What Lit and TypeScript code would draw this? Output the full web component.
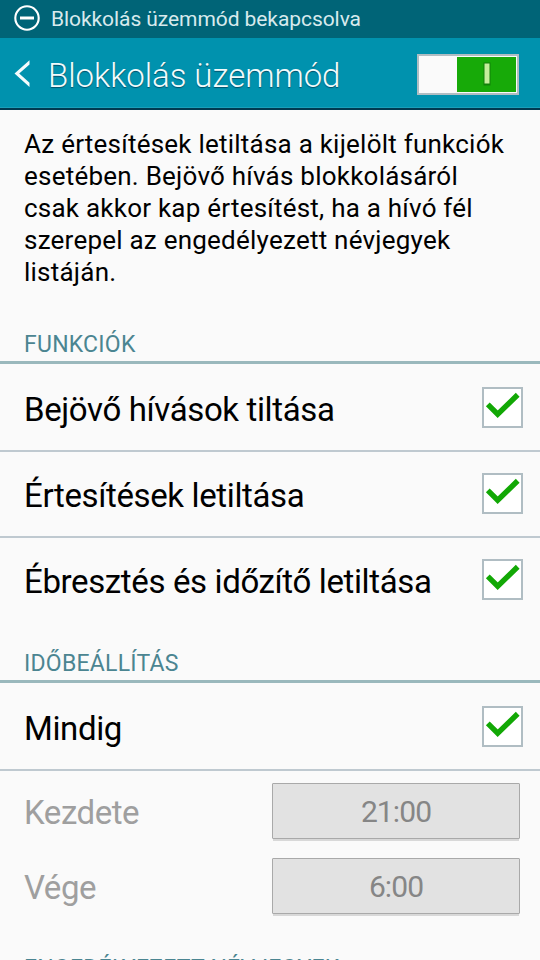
import { LitElement, html, css } from "lit";
import { customElement, property } from "lit/decorators.js";

@customElement("check-row")
class CheckRow extends LitElement {
  @property() label = "";
  static styles = css`
    :host { display: flex; align-items: center; justify-content: space-between; box-sizing: border-box; height: 84px; padding: 0 17px 1px 24px; }
    .label { padding-top: 5px; font-size: 33px; line-height: 40px; white-space: nowrap; color: #000; letter-spacing: -0.37px; }
    .box { box-sizing: border-box; width: 41px; height: 41px; border: 2px solid #b0bdc3; background: #fff; }
    svg { display: block; }
  `;
  render() {
    return html`<span class="label">${this.label}</span>
      <span class="box"><svg width="37" height="37" viewBox="0 0 37 37"><path d="M3.8 15.3 13.7 25.2 33.7 5.8" fill="none" stroke="#12a805" stroke-width="5.4" /></svg></span>`;
  }
}

@customElement("time-row")
class TimeRow extends LitElement {
  @property() label = "";
  @property() time = "";
  static styles = css`
    :host { display: flex; align-items: center; justify-content: space-between; height: 56px; padding: 0 20px 0 24px; color: #9f9f9f; }
    .label { padding-top: 4px; font-size: 33px; line-height: 40px; letter-spacing: -0.45px; }
    .time { box-sizing: border-box; width: 248px; height: 56px; border: 1px solid #a9a9a9; border-radius: 1px; box-shadow: 0 3px 0 -1px #d8d8d8; background: #e2e2e2; color: #868686; font-size: 30px; line-height: 56px; text-align: center; letter-spacing: -0.9px; }
  `;
  render() {
    return html`<span class="label">${this.label}</span><span class="time">${this.time}</span>`;
  }
}

@customElement("app-root")
class AppRoot extends LitElement {
  static styles = css`
    :host { display: flex; flex-direction: column; width: 540px; height: 960px; overflow: hidden; background: #fafafa; font-family: Roboto, sans-serif; font-weight: 400; }
    .status { display: flex; align-items: center; gap: 11px; flex: none; height: 38px; padding-left: 14px; background: #006477; color: #d8eaed; font-size: 21px; letter-spacing: -0.07px; white-space: nowrap; }
    .status svg { margin-top: -2px; }
    .bar { display: flex; align-items: center; box-sizing: border-box; flex: none; height: 72px; padding: 2px 21px 0 14px; background: #0092ae; border-bottom: 2px solid #003a50; box-shadow: inset 0 -1px #1a9fb9; color: #f2fbfc; }
    .title { flex: 1; margin: 3px 0 0 17px; font-size: 33px; font-weight: 300; letter-spacing: -0.05px; text-shadow: 0 1px 1px #00516a; }
    .toggle { display: flex; box-sizing: border-box; width: 102px; height: 41px; padding: 1px; border: 2px solid #b0bdc2; background: #fafafa; }
    .on { display: flex; align-items: center; justify-content: center; margin-left: auto; width: 59px; background: #17aa08; }
    .intro { flex: none; margin: 18px 24px 0; font-size: 26px; line-height: 32px; letter-spacing: 0.23px; white-space: nowrap; color: #000; }
    .head { flex: none; box-sizing: border-box; height: 34px; padding-left: 24px; border-bottom: 3px solid #9ab8bc; font-size: 23px; line-height: 30px; letter-spacing: 0.25px; color: #4b8591; }
    .first { margin-top: 42px; }
    .second { margin-top: 27px; }
    .third { margin-top: 40px; }
    .line { flex: none; height: 2px; background: #bfc9d0; }
    check-row, time-row { flex: none; }
    .tall { height: 86px; padding-bottom: 0; }
    .start { margin-top: 12px; }
    .end { margin-top: 19px; }
  `;
  render() {
    return html`
      <div class="status">
        <svg width="26" height="26" viewBox="0 0 26 26"><circle cx="13" cy="13" r="11.7" fill="none" stroke="#fff" stroke-width="2.1" /><path d="M6 13H20" stroke="#fff" stroke-width="3" /></svg>
        <span>Blokkolás üzemmód bekapcsolva</span>
      </div>
      <div class="bar">
        <svg width="17" height="28" viewBox="0 0 17 28"><path d="M15.5 .2V4.5L5.2 13.5 15.5 22.8V27L.5 13.5Z" fill="#f5fcfd" /></svg>
        <span class="title">Blokkolás üzemmód</span>
        <span class="toggle"><span class="on"><svg width="8" height="24"><rect x=".5" y=".5" width="7" height="23" fill="#128009" /><rect x="1.5" y="1.5" width="5" height="20" fill="#c4ee9c" /></svg></span></span>
      </div>
      <div class="intro">Az értesítések letiltása a kijelölt funkciók<br />esetében. Bejövő hívás blokkolásáról<br />csak akkor kap értesítést, ha a hívó fél<br />szerepel az engedélyezett névjegyek<br />listáján.</div>
      <div class="head first">FUNKCIÓK</div>
      <check-row class="tall" label="Bejövő hívások tiltása"></check-row>
      <div class="line"></div>
      <check-row label="Értesítések letiltása"></check-row>
      <div class="line"></div>
      <check-row label="Ébresztés és időzítő letiltása"></check-row>
      <div class="head second">IDŐBEÁLLÍTÁS</div>
      <check-row class="tall" label="Mindig"></check-row>
      <div class="line"></div>
      <time-row class="start" label="Kezdete" time="21:00"></time-row>
      <time-row class="end" label="Vége" time="6:00"></time-row>
      <div class="head third">ENGEDÉLYEZETT NÉVJEGYEK</div>
    `;
  }
}
